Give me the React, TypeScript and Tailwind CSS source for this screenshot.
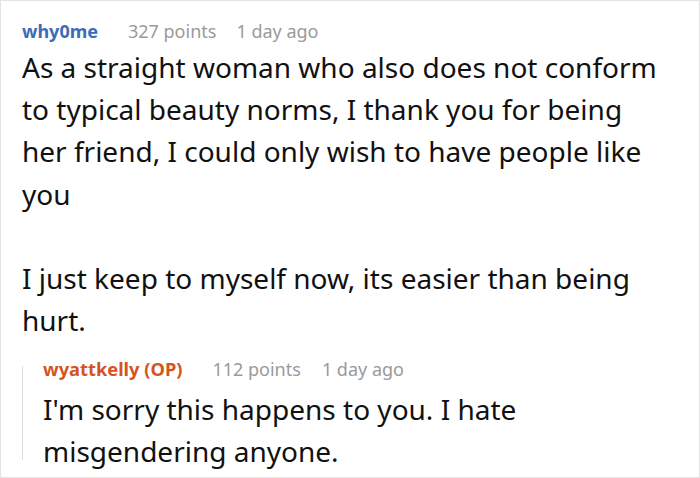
export default function App() {
  return (
    <div
      className="h-[478px] w-[700px] overflow-hidden border border-[#e3e3e3] bg-white"
      style={{ fontFamily: '"Noto Sans", "Open Sans", sans-serif' }}
    >
      <div className="pl-[21px] pr-[42px] pt-[17px]">
        {/* Comment header */}
        <div className="flex items-center gap-[30px] text-[18px] leading-[26px]">
          <span className="font-bold text-[#3b6cb7]">why0me</span>
          <div className="flex items-center gap-[20px] text-[#9a9a9a]">
            <span>327 points</span>
            <span>1 day ago</span>
          </div>
        </div>

        <div className="mt-[2px] text-[28px] leading-[42.2px] text-[#111]">
          <p>
            As a straight woman who also does not conform to typical beauty
            norms, I thank you for being her friend, I could only wish to have
            people like you
          </p>
          <p className="mt-[42px]">
            I just keep to myself now, its easier than being hurt.
          </p>
        </div>

        {/* Reply */}
        <div className="mt-[15px] flex">
          <div className="mb-[12px] mt-[10px] w-[1px] shrink-0 bg-[#dedede]" />
          <div className="pl-[20px]">
            <div className="flex items-center gap-[30px] text-[18px] leading-[26px]">
              <span className="text-[18.3px] font-bold text-[#d4541f]">wyattkelly (OP)</span>
              <div className="flex items-center gap-[21px] text-[#9a9a9a]">
                <span>112 points</span>
                <span>1 day ago</span>
              </div>
            </div>
            <p className="mt-[6px] text-[28px] leading-[42px] text-[#111]">
              I'm sorry this happens to you. I hate misgendering anyone.
            </p>
          </div>
        </div>
      </div>
    </div>
  );
}
